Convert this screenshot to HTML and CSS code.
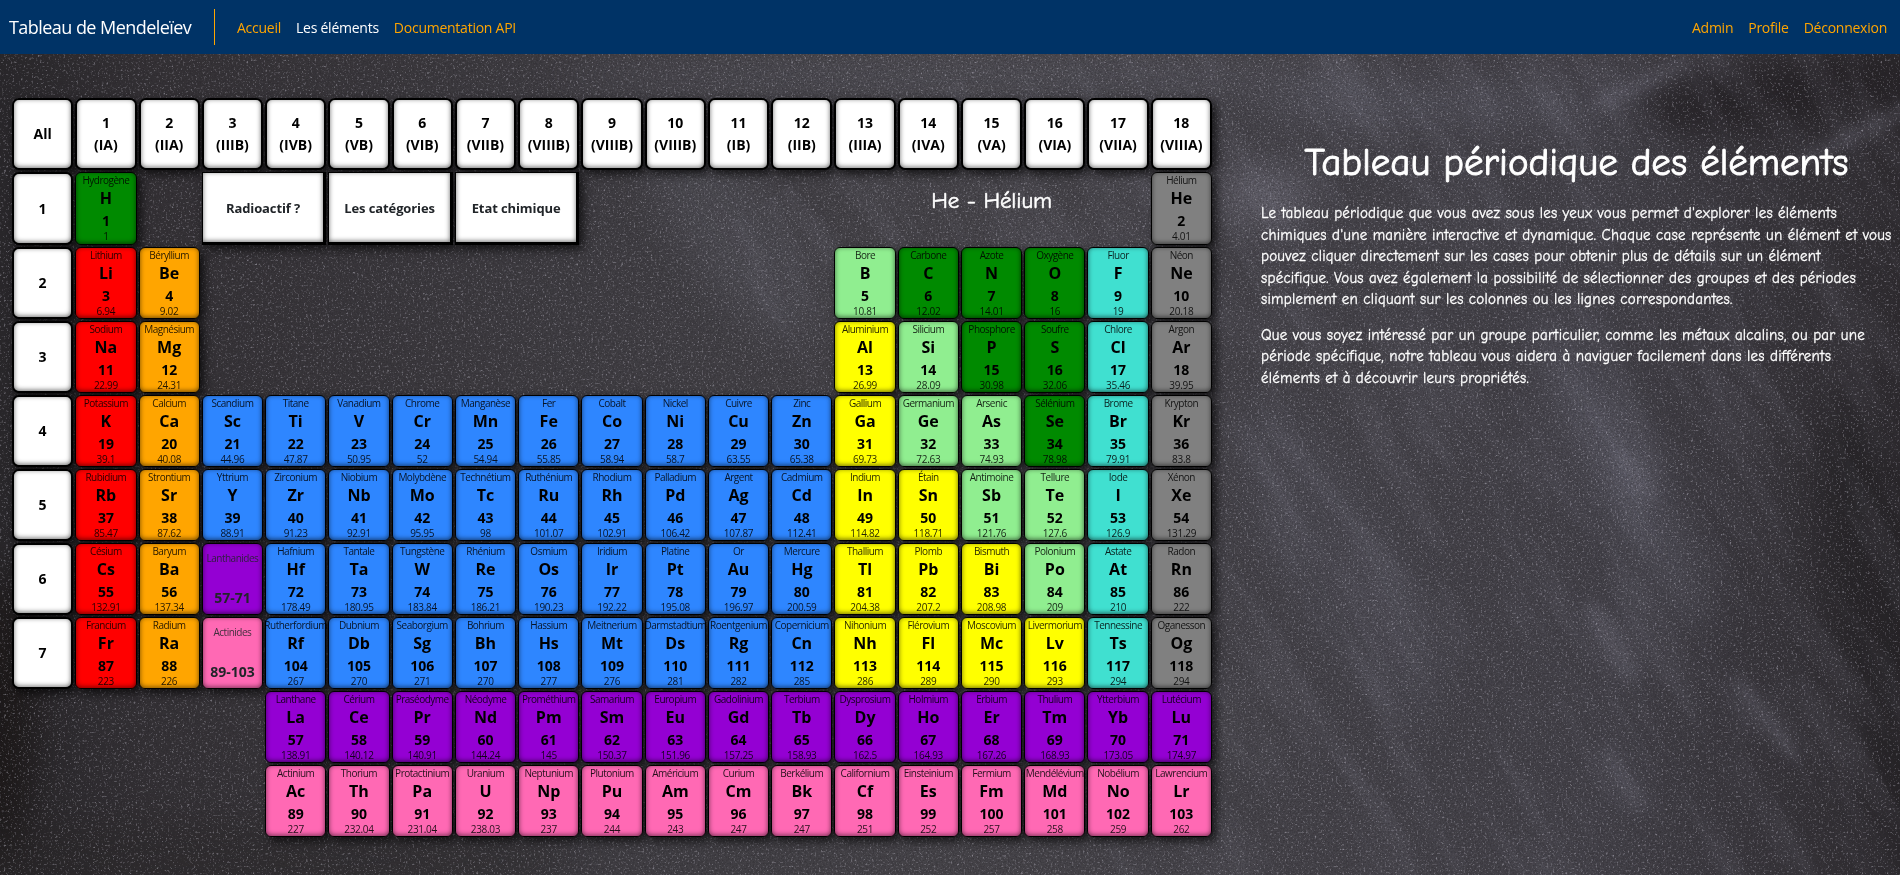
FILE: index.html
```html
<!DOCTYPE html>
<html lang="fr">
<head>
<meta charset="utf-8">
<title>Tableau de Mendeleïev</title>
<link rel="stylesheet" href="styles.css">
</head>
<body>
<svg class="board" width="1900" height="821" viewBox="0 54 1900 821" aria-hidden="true" color-interpolation-filters="sRGB">
  <defs>
    <linearGradient id="slate" x1="0" x2="1" y1="0" y2="0">
      <stop offset="0" stop-color="#29272a"/>
      <stop offset=".08" stop-color="#343135"/>
      <stop offset=".3" stop-color="#3f3d42"/>
      <stop offset=".5" stop-color="#464449"/>
      <stop offset=".85" stop-color="#434148"/>
      <stop offset="1" stop-color="#2e2b2f"/>
    </linearGradient>
    <filter id="soft" x="-50%" y="-50%" width="200%" height="200%"><feGaussianBlur stdDeviation="18"/></filter>
    <filter id="fine" x="-50%" y="-50%" width="200%" height="200%"><feGaussianBlur stdDeviation="7"/></filter>
    <filter id="dust" x="0" y="0" width="100%" height="100%">
      <feTurbulence type="fractalNoise" baseFrequency=".47" numOctaves="3" seed="4"/>
      <feColorMatrix values="0 0 0 0 .8  0 0 0 0 .79  0 0 0 0 .84  2.4 0 0 0 -1.38"/>
    </filter>
    <filter id="grain" x="0" y="0" width="100%" height="100%">
      <feTurbulence type="fractalNoise" baseFrequency=".6" numOctaves="2" seed="9"/>
      <feColorMatrix values="0 0 0 0 .15  0 0 0 0 .14  0 0 0 0 .16  0 1.8 0 0 -.7"/>
    </filter>
    <filter id="streak" x="0" y="0" width="100%" height="100%">
      <feTurbulence type="fractalNoise" baseFrequency=".006 .03" numOctaves="4" seed="12"/>
      <feColorMatrix values="0 0 0 0 .68  0 0 0 0 .68  0 0 0 0 .76  1.6 0 0 0 -.7"/>
    </filter>
  </defs>
  <rect y="54" width="1900" height="821" fill="url(#slate)"/>
  <g filter="url(#soft)">
    <ellipse cx="980" cy="75" rx="420" ry="16" fill="#605f6a" opacity=".5"/>
    <ellipse cx="1420" cy="105" rx="170" ry="18" fill="#62616d" opacity=".5"/>
    <ellipse cx="1265" cy="195" rx="50" ry="30" fill="#777581" opacity=".55"/>
    <ellipse cx="1780" cy="95" rx="150" ry="32" fill="#232023" opacity=".9" transform="rotate(-8 1780 95)"/>
    <ellipse cx="1620" cy="470" rx="34" ry="180" fill="#646471" opacity=".4" transform="rotate(-28 1620 470)"/>
    <ellipse cx="1340" cy="560" rx="60" ry="180" fill="#5c5b66" opacity=".25" transform="rotate(-30 1340 560)"/>
    <ellipse cx="730" cy="230" rx="50" ry="130" fill="#65646d" opacity=".3" transform="rotate(-35 730 230)"/>
    <ellipse cx="1890" cy="640" rx="55" ry="250" fill="#1e1b1e" opacity=".5" transform="rotate(-12 1890 640)"/>
    <ellipse cx="0" cy="720" rx="35" ry="150" fill="#171311" opacity=".7"/>
    <ellipse cx="200" cy="860" rx="380" ry="40" fill="#252224" opacity=".4"/>
  </g>
  <g filter="url(#fine)" fill="#7b7a88" opacity=".34">
    <ellipse cx="1635" cy="475" rx="14" ry="34" transform="rotate(-35 1635 475)"/>
    <ellipse cx="1612" cy="642" rx="14" ry="48" transform="rotate(-32 1612 642)"/>
    <ellipse cx="1765" cy="718" rx="9" ry="54" transform="rotate(-38 1765 718)"/>
    <ellipse cx="1622" cy="780" rx="9" ry="40" transform="rotate(-30 1622 780)"/>
    <ellipse cx="1855" cy="135" rx="7" ry="90" transform="rotate(64 1855 135)"/>
    <ellipse cx="1640" cy="85" rx="8" ry="60" transform="rotate(64 1640 85)"/>
  </g>
  <g transform="rotate(58 1500 450)"><rect x="900" y="-300" width="1300" height="1300" filter="url(#streak)" opacity=".17"/></g>
  <rect y="54" width="1900" height="821" filter="url(#grain)" opacity=".5"/>
  <rect y="54" width="1900" height="821" filter="url(#dust)" opacity=".6"/>
</svg>

<nav class="navbar">
  <a class="brand">Tableau de Mendeleïev</a>
  <span class="divider"></span>
  <a class="link accueil">Accueil</a>
  <a class="link active">Les éléments</a>
  <a class="link docs">Documentation API</a>
  <div class="account">
    <a class="link">Admin</a>
    <a class="link">Profile</a>
    <a class="link">Déconnexion</a>
  </div>
</nav>

<main class="page">
  <div class="table" id="table"></div>
  <section class="intro">
    <h1 class="intro-title">Tableau périodique des éléments</h1>
    <p class="intro-text">Le tableau périodique que vous avez sous les yeux vous permet d'explorer les éléments<br>chimiques d'une manière interactive et dynamique. Chaque case représente un élément et vous<br>pouvez cliquer directement sur les cases pour obtenir plus de détails sur un élément<br>spécifique. Vous avez également la possibilité de sélectionner des groupes et des périodes<br>simplement en cliquant sur les colonnes ou les lignes correspondantes.</p>
    <p class="intro-text">Que vous soyez intéressé par un groupe particulier, comme les métaux alcalins, ou par une<br>période spécifique, notre tableau vous aidera à naviguer facilement dans les différents<br>éléments et à découvrir leurs propriétés.</p>
  </section>
</main>
<script src="script.js"></script>
</body>
</html>
```

FILE: styles.css
```css
* { box-sizing: border-box; }

body {
  margin: 0;
  height: 875px;
  overflow: hidden;
  background: #3a383c;
  font-family: "Open Sans", "Noto Sans", sans-serif;
}

.board {
  position: absolute;
  left: 0;
  top: 54px;
  z-index: -1;
}

.navbar {
  display: flex;
  align-items: center;
  height: 54px;
  padding: 0 13px 0 9px;
  background: #003366;
  color: #ffa500;
}

.brand {
  width: 205px;
  color: #fff;
  font-size: 18px;
  letter-spacing: -.55px;
  white-space: nowrap;
}

.divider {
  width: 1px;
  height: 36px;
  margin-right: 22px;
  background: #ffa500;
}

.link {
  margin-right: 15px;
  font-size: 14px;
  letter-spacing: -.25px;
  white-space: nowrap;
}

.active { color: #fff; }

.account {
  display: flex;
  margin-left: auto;
}

.account .link:last-child { margin-right: 0; }

.page {
  display: flex;
  padding: 44.4px 8px 0 12px;
}

.table {
  display: grid;
  flex: none;
  width: 1200px;
  grid-template-columns: repeat(19, 1fr);
  grid-template-rows: repeat(10, 72.1px);
  gap: 2px;
  color: #000;
  text-align: center;
}

.head,
.cell,
.group {
  border: 1px solid #000;
  border-radius: 6px;
  box-shadow: 4px 4px 10px rgba(0, 0, 0, .7), inset 0 -1px 5px rgba(0, 0, 0, .55);
  white-space: nowrap;
  min-width: 0;
}

.head {
  display: flex;
  flex-direction: column;
  align-items: center;
  justify-content: center;
  border-width: 2px;
  border-radius: 7px;
  background: #fff;
  font-size: 14px;
  font-weight: 700;
  line-height: 22px;
}

.filter {
  display: flex;
  align-items: center;
  justify-content: center;
  border: 1px solid #000;
  border-width: 1px 3px 3px 1px;
  background: #fff;
  box-shadow: 4px 4px 10px rgba(0, 0, 0, .7), inset 0 -1px 5px rgba(0, 0, 0, .55);
  color: #212529;
  font-size: 13px;
  font-weight: 700;
  letter-spacing: -.1px;
  white-space: nowrap;
}

.current {
  padding-top: 9px;
  color: #fff;
  font-size: 23px;
  line-height: 40px;
  letter-spacing: -.1px;
  font-family: "Comic Sans MS", "Comic Neue", "Open Sans", sans-serif;
  -webkit-text-stroke: .5px #fff;
}

.cell {
  display: flex;
  flex-direction: column;
  align-items: center;
}

.name { font-size: 10px; line-height: 14px; letter-spacing: -.5px; }
.symbol { font-size: 16px; font-weight: 700; line-height: 23px; }
.number { font-size: 14px; font-weight: 700; line-height: 22px; }
.mass { font-size: 10px; line-height: 8px; letter-spacing: -.3px; }
.name, .mass { opacity: .85; }

.group {
  display: flex;
  flex-direction: column;
  align-items: center;
  justify-content: space-between;
  padding: 7px 0;
  color: #212529;
}

.group .number { line-height: 18px; }

.alkali { background: #ff0000; }
.earth { background: #ffa500; }
.transition { background: #2e86ff; }
.poor { background: #ffff00; }
.metalloid { background: #90ee90; }
.nonmetal { background: #008a00; }
.halogen { background: #40e0d0; }
.noble { background: #808080; }
.lanthanide { background: #9400d3; }
.actinide { background: #ff69b4; }

.intro {
  width: 632px;
  margin-left: 49px;
  padding-top: 37px;
  color: #fff;
  font-family: "Comic Sans MS", "Comic Neue", "Open Sans", sans-serif;
}

.intro-title {
  margin: 0 0 12px;
  font-size: 39px;
  font-weight: 400;
  line-height: 56px;
  text-align: center;
  white-space: nowrap;
  -webkit-text-stroke: .9px #fff;
}

.intro-text {
  margin: 0 0 14px;
  font-size: 15px;
  line-height: 21.5px;
  letter-spacing: .23px;
  white-space: nowrap;
  -webkit-text-stroke: .3px #fff;
}
```

FILE: script.js
```js
const table = document.getElementById("table");

function add(className, column, row, span, lines) {
  const box = document.createElement("div");
  box.className = className;
  box.style.gridArea = `${row} / ${column} / auto / span ${span}`;
  for (const [kind, text] of lines) {
    const line = document.createElement("span");
    line.className = kind;
    line.textContent = text;
    box.append(line);
  }
  table.append(box);
}

const groups = "IA IIA IIIB IVB VB VIB VIIB VIIIB VIIIB VIIIB IB IIB IIIA IVA VA VIA VIIA VIIIA".split(" ");
add("head", 1, 1, 1, [["", "All"]]);
groups.forEach((g, i) => add("head", i + 2, 1, 1, [["", i + 1], ["", `(${g})`]]));

const categories = {
  k: "alkali", e: "earth", t: "transition", p: "poor", m: "metalloid",
  n: "nonmetal", h: "halogen", g: "noble", l: "lanthanide", a: "actinide"
};

// Each entry: column and category letter, then name, symbol, number, mass.
const rows = [
  "1n Hydrogène H 1 1|18g Hélium He 2 4.01",
  "1k Lithium Li 3 6.94|2e Béryllium Be 4 9.02|13m Bore B 5 10.81|14n Carbone C 6 12.02|15n Azote N 7 14.01|16n Oxygène O 8 16|17h Fluor F 9 19|18g Néon Ne 10 20.18",
  "1k Sodium Na 11 22.99|2e Magnésium Mg 12 24.31|13p Aluminium Al 13 26.99|14m Silicium Si 14 28.09|15n Phosphore P 15 30.98|16n Soufre S 16 32.06|17h Chlore Cl 17 35.46|18g Argon Ar 18 39.95",
  "1k Potassium K 19 39.1|2e Calcium Ca 20 40.08|3t Scandium Sc 21 44.96|4t Titane Ti 22 47.87|5t Vanadium V 23 50.95|6t Chrome Cr 24 52|7t Manganèse Mn 25 54.94|8t Fer Fe 26 55.85|9t Cobalt Co 27 58.94|10t Nickel Ni 28 58.7|11t Cuivre Cu 29 63.55|12t Zinc Zn 30 65.38|13p Gallium Ga 31 69.73|14m Germanium Ge 32 72.63|15m Arsenic As 33 74.93|16n Sélénium Se 34 78.98|17h Brome Br 35 79.91|18g Krypton Kr 36 83.8",
  "1k Rubidium Rb 37 85.47|2e Strontium Sr 38 87.62|3t Yttrium Y 39 88.91|4t Zirconium Zr 40 91.23|5t Niobium Nb 41 92.91|6t Molybdène Mo 42 95.95|7t Technétium Tc 43 98|8t Ruthénium Ru 44 101.07|9t Rhodium Rh 45 102.91|10t Palladium Pd 46 106.42|11t Argent Ag 47 107.87|12t Cadmium Cd 48 112.41|13p Indium In 49 114.82|14p Étain Sn 50 118.71|15m Antimoine Sb 51 121.76|16m Tellure Te 52 127.6|17h Iode I 53 126.9|18g Xénon Xe 54 131.29",
  "1k Césium Cs 55 132.91|2e Baryum Ba 56 137.34|3l Lanthanides 57-71|4t Hafnium Hf 72 178.49|5t Tantale Ta 73 180.95|6t Tungstène W 74 183.84|7t Rhénium Re 75 186.21|8t Osmium Os 76 190.23|9t Iridium Ir 77 192.22|10t Platine Pt 78 195.08|11t Or Au 79 196.97|12t Mercure Hg 80 200.59|13p Thallium Tl 81 204.38|14p Plomb Pb 82 207.2|15p Bismuth Bi 83 208.98|16m Polonium Po 84 209|17h Astate At 85 210|18g Radon Rn 86 222",
  "1k Francium Fr 87 223|2e Radium Ra 88 226|3a Actinides 89-103|4t Rutherfordium Rf 104 267|5t Dubnium Db 105 270|6t Seaborgium Sg 106 271|7t Bohrium Bh 107 270|8t Hassium Hs 108 277|9t Meitnerium Mt 109 276|10t Darmstadtium Ds 110 281|11t Roentgenium Rg 111 282|12t Copernicium Cn 112 285|13p Nihonium Nh 113 286|14p Flérovium Fl 114 289|15p Moscovium Mc 115 290|16p Livermorium Lv 116 293|17h Tennessine Ts 117 294|18g Oganesson Og 118 294",
  "4l Lanthane La 57 138.91|5l Cérium Ce 58 140.12|6l Praséodyme Pr 59 140.91|7l Néodyme Nd 60 144.24|8l Prométhium Pm 61 145|9l Samarium Sm 62 150.37|10l Europium Eu 63 151.96|11l Gadolinium Gd 64 157.25|12l Terbium Tb 65 158.93|13l Dysprosium Dy 66 162.5|14l Holmium Ho 67 164.93|15l Erbium Er 68 167.26|16l Thulium Tm 69 168.93|17l Ytterbium Yb 70 173.05|18l Lutécium Lu 71 174.97",
  "4a Actinium Ac 89 227|5a Thorium Th 90 232.04|6a Protactinium Pa 91 231.04|7a Uranium U 92 238.03|8a Neptunium Np 93 237|9a Plutonium Pu 94 244|10a Américium Am 95 243|11a Curium Cm 96 247|12a Berkélium Bk 97 247|13a Californium Cf 98 251|14a Einsteinium Es 99 252|15a Fermium Fm 100 257|16a Mendélévium Md 101 258|17a Nobélium No 102 259|18a Lawrencium Lr 103 262"
];

rows.forEach((row, r) => {
  if (r < 7) add("head", 1, r + 2, 1, [["", r + 1]]);
  if (r === 0) {
    add("filter", 4, 2, 2, [["", "Radioactif ?"]]);
    add("filter", 6, 2, 2, [["", "Les catégories"]]);
    add("filter", 8, 2, 2, [["", "Etat chimique"]]);
    add("current", 14, 2, 5, [["", "He - Hélium"]]);
  }
  for (const entry of row.split("|")) {
    const [place, name, ...rest] = entry.split(" ");
    const column = parseInt(place, 10) + 1;
    const category = categories[place.slice(-1)];
    if (rest.length === 1) {
      add("group " + category, column, r + 2, 1, [["name", name], ["number", rest[0]]]);
    } else {
      add("cell " + category, column, r + 2, 1,
        [["name", name], ["symbol", rest[0]], ["number", rest[1]], ["mass", rest[2]]]);
    }
  }
});
```
